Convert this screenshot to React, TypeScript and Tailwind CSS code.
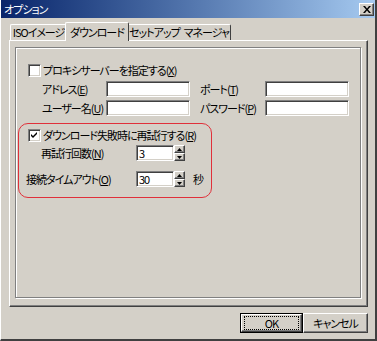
import React from "react";

const raised =
  "border border-t-white border-l-white border-r-[#404040] border-b-[#404040] shadow-[inset_-1px_-1px_0_#808080]";
const sunken =
  "border border-t-[#808080] border-l-[#808080] border-r-white border-b-white shadow-[inset_1px_1px_0_#404040,inset_-1px_-1px_0_#d4d0c8] bg-white";

function Label({ text, k }: { text: string; k: string }) {
  return (
    <span className="whitespace-nowrap">
      {text}(<u>{k}</u>)
    </span>
  );
}

function CheckBox({ checked }: { checked?: boolean }) {
  return (
    <div className={`w-[13px] h-[13px] shrink-0 flex items-center justify-center ${sunken}`}>
      {checked && (
        <svg width="7" height="7" viewBox="0 0 7 7">
          <path d="M0 2 L2 4 L6 0 L6 2 L2 6 L0 4 Z" fill="#000" />
        </svg>
      )}
    </div>
  );
}

function Spin() {
  return (
    <div className="flex flex-col w-[11px] h-[16px]">
      <div className={`h-[8px] bg-[#d4d0c8] flex items-center justify-center ${raised}`}>
        <svg width="5" height="3" viewBox="0 0 5 3">
          <path d="M2.5 0 L5 3 L0 3 Z" fill="#000" />
        </svg>
      </div>
      <div className={`h-[8px] bg-[#d4d0c8] flex items-center justify-center ${raised}`}>
        <svg width="5" height="3" viewBox="0 0 5 3">
          <path d="M0 0 L5 0 L2.5 3 Z" fill="#000" />
        </svg>
      </div>
    </div>
  );
}

export default function App() {
  return (
    <div className="w-[377px] h-[341px] bg-[#d4d0c8] flex flex-col border-l border-l-white border-r-2 border-r-[#404040] border-b-2 border-b-[#404040] text-[11px] leading-none tracking-[-1px] text-black font-['Noto_Sans_CJK_JP','Noto_Sans',sans-serif] [font-feature-settings:'palt']">
      <div className="h-[18px] flex items-center justify-between bg-gradient-to-r from-[#0a246a] to-[#a6caf0] pl-[3px] pr-[1px]">
        <span className="text-white">オプション</span>
        <div className={`w-[15px] h-[13px] bg-[#d4d0c8] flex items-center justify-center ${raised}`}>
          <svg width="8" height="7" viewBox="0 0 8 7">
            <path d="M0 0 L2 0 L4 2.5 L6 0 L8 0 L5 3.5 L8 7 L6 7 L4 4.5 L2 7 L0 7 L3 3.5 Z" fill="#000" />
          </svg>
        </div>
      </div>

      <div className="flex flex-col pt-[4px] pl-[8px]">
        <div className="flex items-end h-[18px] pl-[1px] whitespace-nowrap">
          <div className="w-[57px] h-[16px] flex items-center justify-center border-t border-l border-r border-t-white border-l-white border-r-[#404040] rounded-t-[2px]">
            ISOイメージ
          </div>
          <div className="relative z-10 -mx-[2px] -mb-px w-[64px] h-[19px] bg-[#d4d0c8] flex items-center justify-center border-t border-l border-r border-t-white border-l-white border-r-[#404040] rounded-t-[2px]">
            ダウンロード
          </div>
          <div className="w-[104px] h-[16px] flex items-center justify-center gap-[4px] border-t border-l border-r border-t-white border-l-white border-r-[#404040] rounded-t-[2px]">
            <span>セットアップ</span>
            <span>マネージャ</span>
          </div>
        </div>

        <div className="w-[359px] h-[267px] border-t border-l border-t-white border-l-white border-r border-b border-r-[#404040] border-b-[#404040] shadow-[inset_-1px_-1px_0_#808080] pt-[6px] pl-[5px]">
          <div className="w-[346px] h-[251px] border border-[#808080] shadow-[inset_1px_1px_0_white,1px_1px_0_white] flex flex-col">
            <div className="flex items-center gap-[2px] mt-[16px] ml-[12px] h-[13px]">
              <CheckBox />
              <Label text="プロキシサーバーを指定する" k="X" />
            </div>

            <div className="grid grid-cols-[64px_84px_10px_65px_84px] gap-y-[3px] mt-[4px] ml-[26px] items-center">
              <Label text="アドレス" k="E" />
              <div className={`h-[16px] ${sunken}`} />
              <div />
              <Label text="ポート" k="T" />
              <div className={`h-[16px] ${sunken}`} />
              <Label text="ユーザー名" k="U" />
              <div className={`h-[16px] ${sunken}`} />
              <div />
              <Label text="パスワード" k="P" />
              <div className={`h-[16px] ${sunken}`} />
            </div>

            <div className="mt-[7px] ml-[2px] w-[194px] h-[75px] border border-[#e0303a] rounded-[10px] flex flex-col pt-[5px] pl-[9px]">
              <div className="flex items-center gap-[2px] h-[13px]">
                <CheckBox checked />
                <Label text="ダウンロード失敗時に再試行する" k="R" />
              </div>
              <div className="flex items-center mt-[3px] ml-[13px] h-[16px]">
                <div className="w-[95px]">
                  <Label text="再試行回数" k="N" />
                </div>
                <div className={`w-[38px] h-[16px] pl-[2px] flex items-center ${sunken}`}>3</div>
                <Spin />
              </div>
              <div className="flex items-center mt-[10px] -ml-[2px] h-[16px]">
                <div className="w-[110px]">
                  <Label text="接続タイムアウト" k="O" />
                </div>
                <div className={`w-[38px] h-[16px] pl-[2px] flex items-center ${sunken}`}>30</div>
                <Spin />
                <span className="ml-[8px]">秒</span>
              </div>
            </div>
          </div>
        </div>
      </div>

      <div className="flex justify-end pt-[6px] pr-[7px]">
        <div className="w-[63px] h-[20px] border border-black">
          <div className={`w-full h-full flex items-center justify-center ${raised}`}>
            <div className="w-[55px] h-[14px] border border-dotted border-black flex items-center justify-center">
              OK
            </div>
          </div>
        </div>
        <div className={`w-[65px] h-[20px] flex items-center justify-center ${raised}`}>キャンセル</div>
      </div>
    </div>
  );
}
